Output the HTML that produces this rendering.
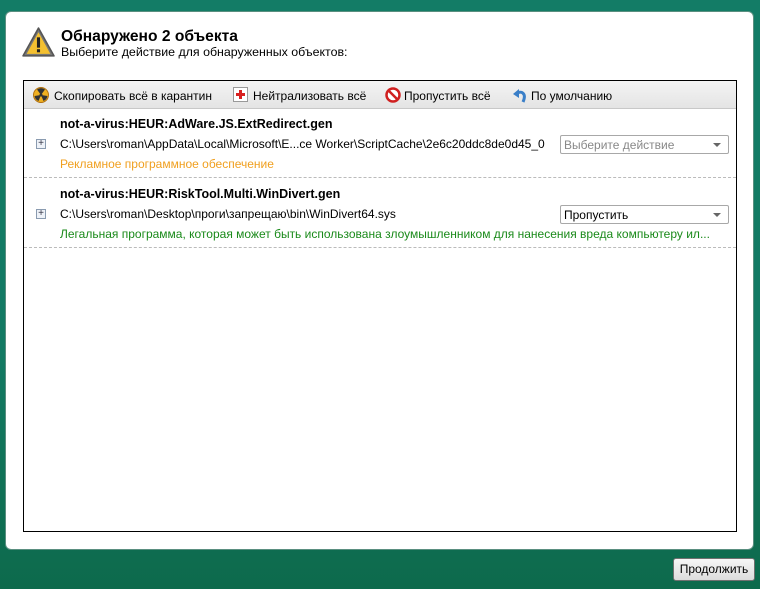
<!DOCTYPE html>
<html><head><meta charset="utf-8">
<style>
*{margin:0;padding:0;box-sizing:border-box}
body{width:760px;height:589px;overflow:hidden;background:linear-gradient(#137c66 0,#137a63 60%,#0d6a4c 100%);font-family:"Liberation Sans",sans-serif;font-size:12px;color:#000;position:relative}
.panel{position:absolute;left:5px;top:11px;width:749px;height:539px;background:#fff;border-radius:6px;border:1px solid #5a8f80}
.t{position:absolute;white-space:nowrap}
.list{position:absolute;left:23px;top:80px;width:714px;height:452px;border:1px solid #000;background:#fff}
.tb{position:absolute;left:0;top:0;width:712px;height:28px;background:linear-gradient(#f4f4f4,#e4e4e4);border-bottom:1px solid #c8c8c8}
.sel{position:absolute;left:536px;width:169px;height:19px;border:1px solid #a8a8a8;border-radius:2px;background:#fff;padding:2px 3px;font-size:12px}
.sel:after{content:"";position:absolute;right:7px;top:7px;border-left:4px solid transparent;border-right:4px solid transparent;border-top:4px solid #666}
.dash{position:absolute;left:0;width:712px;border-top:1px dashed #bbb}
.pl{position:absolute;left:12px;width:10px;height:10px;border:1px solid #8a9bb0;background:#eef2f8;font-size:10px;line-height:8px;text-align:center;color:#334}
.btn{position:absolute;left:673px;top:558px;width:82px;height:23px;border:1px solid #707070;border-radius:3px;background:linear-gradient(#f6f6f6,#dcdcdc);text-align:center;line-height:21px;font-size:12px}
</style></head><body>
<div class="panel"></div>
<svg style="position:absolute;left:22px;top:26px" width="33" height="33" viewBox="0 0 32 32"><path d="M16 2 L31 29 L1 29 Z" fill="#777" stroke="#555" stroke-width="1.5" stroke-linejoin="round"/><path d="M16 6 L27.5 27 L4.5 27 Z" fill="#f4c030"/><rect x="14.5" y="11" width="3" height="10" fill="#222"/><rect x="14.5" y="22.5" width="3" height="3" fill="#222"/></svg>
<div class="t" style="left:61px;top:28px;font-size:15.6px;font-weight:bold">Обнаружено 2 объекта</div>
<div class="t" style="left:61px;top:45px;font-size:12.4px">Выберите действие для обнаруженных объектов:</div>
<div class="list">
 <div class="tb">
  <svg style="position:absolute;left:9px;top:6px" width="16" height="16" viewBox="0 0 16 16"><circle cx="8" cy="8" r="7.5" fill="#f0b020" stroke="#b07010"/><circle cx="8" cy="8" r="1.5" fill="#333"/><path d="M8 8 L4 2.5 A6.5 6.5 0 0 1 12 2.5Z M8 8 L14.5 9 A6.5 6.5 0 0 1 10.5 14Z M8 8 L5.5 14 A6.5 6.5 0 0 1 1.5 9Z" fill="#333"/></svg>
  <div class="t" style="left:30px;top:8px">Скопировать всё в карантин</div>
  <svg style="position:absolute;left:209px;top:6px" width="15" height="15"><rect x="0.5" y="0.5" width="14" height="14" fill="#fff" stroke="#999"/><path d="M6 3h3v3h3v3h-3v3h-3v-3h-3v-3h3z" fill="#d82020"/></svg>
  <div class="t" style="left:229px;top:8px">Нейтрализовать всё</div>
  <svg style="position:absolute;left:361px;top:6px" width="16" height="16"><circle cx="8" cy="8" r="6.5" fill="#fff" stroke="#d02020" stroke-width="2.5"/><path d="M3.5 3.5 L12.5 12.5" stroke="#d02020" stroke-width="2.5"/></svg>
  <div class="t" style="left:380px;top:8px">Пропустить всё</div>
  <svg style="position:absolute;left:488px;top:6px" width="16" height="16"><path d="M4 7 C9 3 15 6 11 15" fill="none" stroke="#3a7fc8" stroke-width="3"/><path d="M1 7 L7 2 L7 11Z" fill="#3a7fc8"/></svg>
  <div class="t" style="left:507px;top:8px">По умолчанию</div>
 </div>
 <div class="t" style="left:36px;top:36px;font-weight:bold;font-size:12.5px">not-a-virus:HEUR:AdWare.JS.ExtRedirect.gen</div>
 <div class="pl" style="top:58px">+</div>
 <div class="t" style="left:36px;top:56px">C:\Users\roman\AppData\Local\Microsoft\E...ce Worker\ScriptCache\2e6c20ddc8de0d45_0</div>
 <div class="sel" style="top:54px;color:#888">Выберите действие</div>
 <div class="t" style="left:36px;top:76px;color:#f0a020">Рекламное программное обеспечение</div>
 <div class="dash" style="top:96px"></div>
 <div class="t" style="left:36px;top:106px;font-weight:bold;font-size:12.5px">not-a-virus:HEUR:RiskTool.Multi.WinDivert.gen</div>
 <div class="pl" style="top:128px">+</div>
 <div class="t" style="left:36px;top:126px">C:\Users\roman\Desktop\проги\запрещаю\bin\WinDivert64.sys</div>
 <div class="sel" style="top:124px">Пропустить</div>
 <div class="t" style="left:36px;top:146px;color:#1a8a1a">Легальная программа, которая может быть использована злоумышленником для нанесения вреда компьютеру ил...</div>
 <div class="dash" style="top:166px"></div>
</div>
<div class="btn">Продолжить</div>
</body></html>
